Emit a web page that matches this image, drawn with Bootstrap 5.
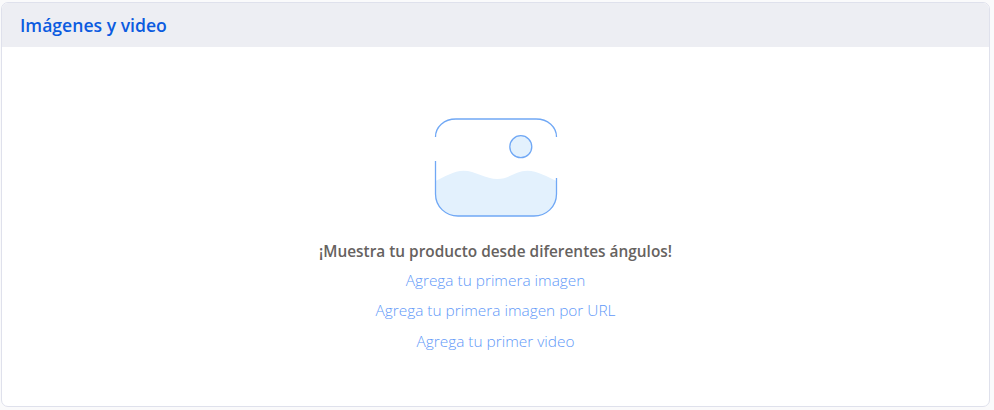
<!DOCTYPE html>
<html lang="es">
  <head>
    <meta charset="utf-8" />
    <meta name="viewport" content="width=device-width, initial-scale=1" />
    <title>Imágenes y video</title>
    <link href="https://cdn.jsdelivr.net/npm/bootstrap@5.3.2/dist/css/bootstrap.min.css" rel="stylesheet" />
    <style>
      body { background: #fafafb; font-family: "Open Sans", sans-serif; padding: 2px 4px 0 1px; }
      .media-box { height: 405px; border: 1px solid #dfe1ec; border-radius: 7px; overflow: hidden; }
      .media-head { height: 44px; background: #edeef3; padding: 2px 18px 0; border: 0; border-radius: 0; }
      .media-head h2 { font-size: 17.6px; font-weight: 600; color: #0b5be0; margin: 0; }
      .media-body { padding-top: 70px; }
      .media-body svg { display: block; margin-bottom: 24px; }
      .media-title { font-size: 15.4px; font-weight: 600; color: #666260; margin-bottom: 8px; line-height: 21px; }
      .media-link { font-size: 15.4px; font-weight: 300; color: #6299f8; text-decoration: none; line-height: 21px; margin-bottom: 9.4px; }
    </style>
  </head>
  <body>
    <div class="card media-box">
      <div class="card-header media-head d-flex align-items-center">
        <h2>Imágenes y video</h2>
      </div>
      <div class="card-body media-body d-flex flex-column align-items-center">
        <svg width="124" height="100" viewBox="0 0 124 100" fill="none">
          <path d="M1.500 64C10 60 20 53.700 29.500 53.700C41 53.700 52 62 63.500 62C75 62 82 53.700 93.500 53.700C103 53.700 114 60 122.500 64V77C122.500 90 112 99 100 99H24C12 99 1.500 90 1.500 77Z" fill="#e3f1fd" />
          <path d="M1.500 44V77C1.500 90 12 99 24 99H100C112 99 122.500 90 122.500 77V61" stroke="#70a8f5" stroke-width="1.300" />
          <path d="M1.500 20C1.500 10 10 2 22 2H102C114 2 122.500 10 122.500 20" stroke="#70a8f5" stroke-width="1.300" />
          <circle cx="86.800" cy="29.700" r="11" fill="#e3f1fd" stroke="#70a8f5" stroke-width="1.300" />
        </svg>
        <p class="media-title">¡Muestra tu producto desde diferentes ángulos!</p>
        <a class="media-link" href="#">Agrega tu primera imagen</a>
        <a class="media-link" href="#">Agrega tu primera imagen por URL</a>
        <a class="media-link" href="#">Agrega tu primer video</a>
      </div>
    </div>
    <script src="https://cdn.jsdelivr.net/npm/bootstrap@5.3.2/dist/js/bootstrap.bundle.min.js"></script>
  </body>
</html>
